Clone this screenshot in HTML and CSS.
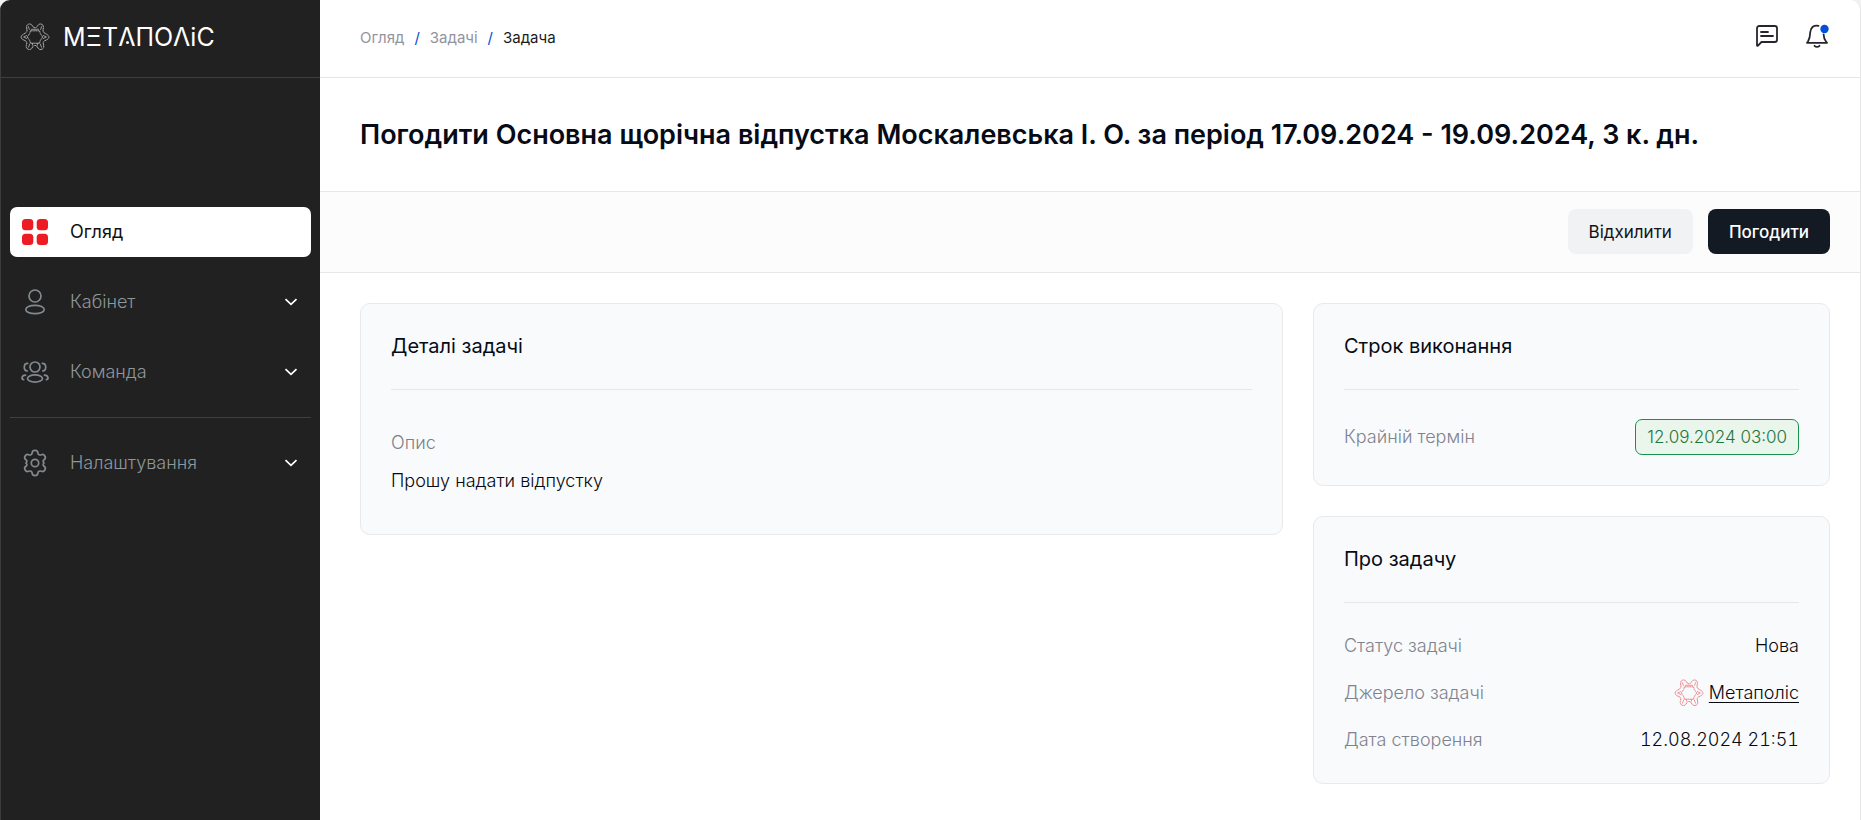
FILE: index.html
```html
<!DOCTYPE html>
<html lang="uk">
<head>
<meta charset="utf-8">
<meta name="viewport" content="width=device-width, initial-scale=1">
<title>Задача</title>
<link rel="stylesheet" href="styles.css">
</head>
<body>
<svg class="sprite" aria-hidden="true">
  <symbol id="emblem" viewBox="0 0 30 28">
    <g fill="none" stroke="currentColor" stroke-width="1">
      <path d="M15 4.800c-1.300 0-1.900-.8-2.600-2C11.200.3 7.200.3 6.700 3.300c-.4 2.300.6 3.300.2 4.900C6.500 9.700 5 10.300 3.500 11.200c-3.200 1.700-3.200 4.200 0 5.700 1.800.8 3.200 1.300 3.300 3 .1 1.600-1 2.700-.4 4.500.8 2.600 4.400 2.800 5.600.6.800-1.400 1.500-2.600 3-2.600s2.200 1.200 3 2.600c1.200 2.200 4.800 2 5.600-.6.600-1.800-.5-2.900-.4-4.500.1-1.700 1.500-2.200 3.300-3 3.200-1.500 3.200-4 0-5.700-1.500-.9-3-1.500-3.400-3-.4-1.600.6-2.600.2-4.900-.5-3-4.500-3-5.700-.5-.7 1.200-1.300 2-2.600 2z" stroke-dasharray="2 .3"/>
      <path d="M10.500 7.800h9l.8 2.700 2.400 3.500-2.400 3.500-.8 2.700h-9l-.8-2.700L7.300 14l2.400-3.500z" stroke-dasharray="1.500 .3"/>
      <path d="M8.300 3.200l1.200 3.600M21.700 3.200l-1.200 3.600M3.600 14l3.400-1.600M3.600 14L7 15.600M26.400 14L23 12.400M26.400 14L23 15.600M8.300 24.600l1.600-4M21.700 24.600l-1.600-4M11 6.300h8M12.500 20v2.500M17.500 20v2.500" stroke-width=".8"/>
    </g>
  </symbol>
  <symbol id="chevron" viewBox="0 0 14 8">
    <path d="M1.500 1.200L7 6.400l5.500-5.200" fill="none" stroke="currentColor" stroke-width="1.700"/>
  </symbol>
</svg>
<div class="app">
  <aside class="sidebar">
    <a class="brand" href="#">
      <svg class="emblem"><use href="#emblem"/></svg>
      <span class="wordmark">МΞТ<span class="dotted">Λ</span>ПОΛіС</span>
    </a>
    <nav class="menu">
      <a class="item active" href="#">
        <svg class="icon" viewBox="0 0 30 30" fill="#ed1c24"><rect x="2" y="2" width="11.300" height="11.300" rx="3.500"/><rect x="16.700" y="2" width="11.300" height="11.300" rx="3.500"/><rect x="2" y="16.700" width="11.300" height="11.300" rx="3.500"/><rect x="16.700" y="16.700" width="11.300" height="11.300" rx="3.500"/></svg>
        <span class="label">Огляд</span>
      </a>
      <button class="item" type="button">
        <svg class="icon line" viewBox="0 0 30 30"><circle cx="15" cy="9" r="6"/><ellipse cx="15" cy="22.500" rx="9.200" ry="4.200"/></svg>
        <span class="label">Кабінет</span>
        <svg class="chevron"><use href="#chevron"/></svg>
      </button>
      <button class="item" type="button">
        <svg class="icon line" viewBox="0 0 30 30"><circle cx="15" cy="10" r="5"/><ellipse cx="15" cy="21.500" rx="7.500" ry="3.600"/><path d="M7.700 6.300c-4.500 0-4.500 7.200-.4 7.700M22.300 6.300c4.500 0 4.500 7.200.4 7.700M5.500 18.200c-4.200.4-4.300 3.800-1.800 4.500M24.500 18.200c4.200.4 4.300 3.800 1.800 4.500"/></svg>
        <span class="label">Команда</span>
        <svg class="chevron"><use href="#chevron"/></svg>
      </button>
      <hr class="rule">
      <button class="item" type="button">
        <svg class="icon line" viewBox="0 0 30 30"><circle cx="15" cy="15" r="3.700"/><path d="M12.200 4.600c.3-3 5.300-3 5.600 0 .2 2 1.900 2.900 3.700 2.100 2.700-1.200 5.200 3 2.900 4.800-1.600 1.200-1.600 2.300-.6 3.100.3.200.3.600 0 .8-1 .8-1 1.900.6 3.100 2.300 1.800-.2 6-2.900 4.800-1.800-.8-3.500.1-3.700 2.100-.3 3-5.300 3-5.600 0-.2-2-1.900-2.900-3.700-2.100-2.700 1.200-5.200-3-2.900-4.800 1.600-1.200 1.600-2.300.6-3.100-.3-.2-.3-.6 0-.8 1-.8 1-1.900-.6-3.100-2.300-1.800.2-6 2.900-4.800 1.800.8 3.500-.1 3.700-2.100z"/></svg>
        <span class="label">Налаштування</span>
        <svg class="chevron"><use href="#chevron"/></svg>
      </button>
    </nav>
  </aside>
  <main class="main">
    <header class="topbar">
      <nav class="crumbs">
        <a href="#">Огляд</a><span class="slash">/</span><a href="#">Задачі</a><span class="slash">/</span><span class="current">Задача</span>
      </nav>
      <div class="tools">
        <button class="tool" type="button" aria-label="Повідомлення">
          <svg viewBox="0 0 24 24" class="tool-icon"><path d="M2 21.500V4.300C2 3 3 2 4.300 2h15.400C21 2 22 3 22 4.300v11.400c0 1.300-1 2.300-2.300 2.300H6.500L3 21.600c-.4.400-1 .2-1-.1zM6 8h7M6 12h12"/></svg>
        </button>
        <button class="tool" type="button" aria-label="Сповіщення">
          <svg viewBox="0 0 24 24" class="tool-icon"><path d="M13.500 1.800C9 .8 5.600 3.500 5.300 8c-.2 4.500-.8 7-2.300 9.500L2 18.800h20l-1-1.300c-1.500-2-2.300-4.500-2.400-7M9.500 21.800c1.400 1.400 3.600 1.400 5 0"/><circle cx="19.500" cy="5" r="4.200" fill="#0050dc" stroke="none"/></svg>
        </button>
      </div>
    </header>
    <section class="heading">
      <h1>Погодити Основна щорічна відпустка Москалевська І. О. за період 17.09.2024 - 19.09.2024, 3 к. дн.</h1>
    </section>
    <section class="actions">
      <button class="btn" type="button">Відхилити</button>
      <button class="btn primary" type="button">Погодити</button>
    </section>
    <div class="content">
      <section class="card details">
        <h2>Деталі задачі</h2>
        <div class="description">
          <p class="caption">Опис</p>
          <p>Прошу надати відпустку</p>
        </div>
      </section>
      <div class="side">
        <section class="card">
          <h2>Строк виконання</h2>
          <dl class="facts deadline">
            <div class="row"><dt>Крайній термін</dt><dd class="badge">12.09.2024 03:00</dd></div>
          </dl>
        </section>
        <section class="card">
          <h2>Про задачу</h2>
          <dl class="facts">
            <div class="row"><dt>Статус задачі</dt><dd>Нова</dd></div>
            <div class="row"><dt>Джерело задачі</dt><dd class="source"><svg class="emblem"><use href="#emblem"/></svg><a href="#">Метаполіс</a></dd></div>
            <div class="row"><dt>Дата створення</dt><dd class="date">12.08.2024 21:51</dd></div>
          </dl>
        </section>
      </div>
    </div>
  </main>
</div>
</body>
</html>
```
FILE: styles.css
```css
* { box-sizing: border-box; }
body {
  margin: 0;
  background: #f1f1f1;
  color: #08080e;
  font: 300 18px/24px Inter, "Noto Sans", sans-serif;
}
button { font: inherit; color: inherit; border: 0; background: none; cursor: pointer; }
a { color: inherit; text-decoration: none; }
h1, h2, p, dl, dd { margin: 0; }
.sprite { display: none; }

.app {
  display: flex;
  min-height: 100vh;
  background: #fff;
  border: 0 solid #e6e6e6;
  border-right-width: 1px;
  border-radius: 10px 10px 0 0;
  overflow: hidden;
}

.sidebar { flex: 0 0 320px; background: #212121; border-left: 1px solid #3c3c3c; }
.brand {
  display: flex;
  align-items: center;
  gap: 13px;
  height: 78px;
  padding: 0 19px 4px;
  border-bottom: 1px solid #394047;
  color: #fff;
}
.emblem { width: 30px; height: 28px; flex: none; }
.brand .emblem { color: #b5b5b5; }
.wordmark { font: 400 25px/28px Inter, sans-serif; }
.dotted { position: relative; }
.dotted::after {
  content: "";
  position: absolute;
  left: 50%;
  bottom: 8px;
  width: 3px;
  height: 3px;
  margin-left: -1px;
  border-radius: 50%;
  background: currentColor;
}

.menu { display: flex; flex-direction: column; gap: 20px; padding: 129px 9px 20px; }
.item {
  display: flex;
  align-items: center;
  gap: 20px;
  height: 50px;
  padding: 0 13px 0 10px;
  border-radius: 7px;
  color: #8e979c;
  text-align: left;
}
.item.active { background: #fff; color: #111; font-weight: 400; }
.icon { width: 30px; height: 30px; flex: none; }
.line { fill: none; stroke: #828a8f; stroke-width: 1.700; stroke-linecap: round; }
.label { flex: 1; }
.chevron { width: 14px; height: 8px; color: #fff; }
.rule { width: 100%; margin: 0; border: 0; border-top: 1px solid #394047; }

.main { flex: 1; min-width: 0; }
.topbar {
  display: flex;
  justify-content: space-between;
  align-items: center;
  height: 78px;
  padding: 0 31px 6px 40px;
  border-bottom: 1px solid #e6e7e9;
}
.crumbs { display: flex; gap: 10px; padding-top: 4px; font-size: 15px; font-weight: 400; line-height: 20px; color: #92939e; }
.slash { color: #0a4bd0; }
.current { color: #1b1b22; }
.tools { display: flex; gap: 26px; }
.tool { display: flex; padding: 0; }
.tool-icon { width: 24px; height: 24px; fill: none; stroke: #25252d; stroke-width: 1.800; stroke-linecap: round; stroke-linejoin: round; overflow: visible; }

.heading { padding: 38px 40px; border-bottom: 1px solid #e6e7e9; }
h1 { font-size: 27px; line-height: 37px; font-weight: 600; color: #060b16; }
.actions {
  display: flex;
  justify-content: flex-end;
  gap: 15px;
  padding: 17px 30px 18px;
  background: #fcfcfc;
  border-bottom: 1px solid #e6e7e9;
}
.btn { height: 45px; padding: 0 21px; border-radius: 8px; background: #f1f2f4; font-size: 17px; font-weight: 400; color: #10131a; }
.primary { background: #131a24; color: #fff; font-weight: 500; }

.content { display: grid; grid-template-columns: 923fr 517fr; align-items: start; gap: 30px; padding: 30px 30px 36px 40px; }
.side { display: grid; gap: 30px; }
.card { padding: 30px; background: #f9fafc; border: 1px solid #e8e9eb; border-radius: 10px; }
h2 { padding-bottom: 30px; border-bottom: 1px solid #e6e7e9; font-size: 20px; line-height: 25px; font-weight: 400; color: #060b16; }
.description { display: grid; gap: 14px; padding: 41px 0 11px; }
.caption { color: #7b8085; }
.facts { display: grid; gap: 21px; padding: 31px 0 1px; }
.deadline { padding: 29px 0 0; }
.row { display: flex; justify-content: space-between; align-items: center; }
dt { color: #80838e; }
.date { font-variant-numeric: tabular-nums; }
.badge { padding: 5px 11px; border: 1px solid #16924e; border-radius: 7px; background: #eaf5ec; color: #1b7641; font-size: 17px; }
.source { display: flex; align-items: center; gap: 5px; }
.source .emblem { color: #ea7f84; }
.source a { text-decoration: underline; text-underline-offset: 3px; }
```
